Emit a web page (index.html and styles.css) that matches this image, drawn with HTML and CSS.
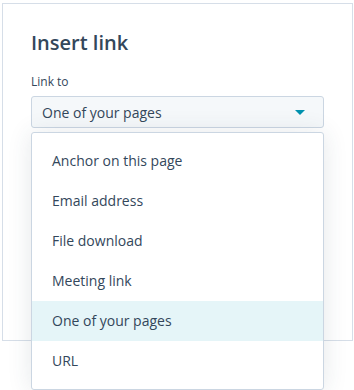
FILE: index.html
```html
<!DOCTYPE html>
<html>
<head>
  <meta charset="UTF-8">
  <title>Insert link</title>
  <link rel="stylesheet" href="styles.css">
</head>
<body>
  <div class="link-panel">
    <h2 class="panel-title">Insert link</h2>
    <label class="field-label">Link to</label>
    <div class="select-wrap">
      <div class="select-box">
        <span class="select-value">One of your pages</span>
        <span class="select-caret"></span>
      </div>
      <ul class="select-menu">
        <li class="menu-item">Anchor on this page</li>
        <li class="menu-item">Email address</li>
        <li class="menu-item">File download</li>
        <li class="menu-item">Meeting link</li>
        <li class="menu-item selected">One of your pages</li>
        <li class="menu-item">URL</li>
      </ul>
    </div>
  </div>
</body>
</html>
```

FILE: styles.css
```css
html {
  height: 100%;
}

body {
  font-family: "Open Sans", "Noto Sans", Arial, sans-serif;
  color: #33475b;
  margin: 0;
  min-height: 100%;
  background-color: #fff;
}

/* Dialog panel */
.link-panel {
  box-sizing: border-box;
  width: 351px;
  height: 338px;
  margin: 3px 0 0 2px;
  padding: 26px 28px 0 28px;
  border: 1px solid #d6dee8;
  background-color: #fff;
}

.panel-title {
  margin: 0 0 18px 0;
  font-size: 20px;
  font-weight: 600;
  line-height: 26px;
}

.field-label {
  display: block;
  font-size: 12px;
  line-height: 16px;
  margin-bottom: 6px;
}

/* Select */
.select-wrap {
  position: relative;
}

.select-box {
  box-sizing: border-box;
  height: 32px;
  display: flex;
  align-items: center;
  justify-content: space-between;
  padding: 0 18px 0 10px;
  background-color: #f5f8fa;
  border: 1px solid #cbd6e2;
  border-radius: 3px;
  font-size: 14px;
}

.select-caret {
  width: 0;
  height: 0;
  border-left: 5px solid transparent;
  border-right: 5px solid transparent;
  border-top: 5px solid #0091ae;
}

.select-menu {
  position: absolute;
  top: 36px;
  left: 0;
  right: 0;
  margin: 0;
  padding: 8px 0;
  list-style: none;
  background-color: #fff;
  border: 1px solid #cbd6e2;
  border-radius: 3px;
  box-shadow: 0 1px 24px rgba(45, 62, 80, 0.12);
}

.menu-item {
  height: 40px;
  line-height: 40px;
  padding: 0 20px;
  font-size: 14px;
}

.menu-item.selected {
  background-color: #e5f5f8;
}
```
